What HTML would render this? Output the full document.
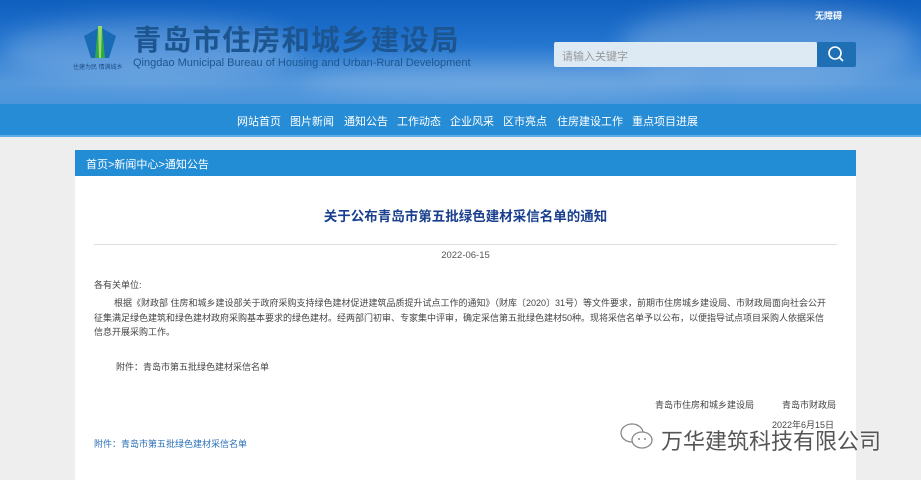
<!DOCTYPE html>
<html><head><meta charset="utf-8"><style>
*{margin:0;padding:0;box-sizing:border-box}
body{width:921px;height:480px;overflow:hidden;background:#eeeeee;font-family:"Liberation Sans","Noto Sans CJK SC",sans-serif;position:relative}
.hd{position:absolute;left:0;top:0;width:921px;height:104px;background:linear-gradient(180deg,#0f5fbf 0%,#2476d0 45%,#5598dc 80%,#4b95dc 100%)}
.cloud{position:absolute;border-radius:50%;background:rgba(255,255,255,.22);filter:blur(12px)}
.nav{position:absolute;left:0;top:104px;width:921px;height:33px;background:#268cd5;border-bottom:2px solid #5aaee8}
.nav span{position:absolute;top:9px;color:#fff;font-size:11px}
.t1{position:absolute;left:133px;top:24px;font-size:28.5px;font-weight:bold;color:#1d5590;letter-spacing:1.2px;line-height:34px}
.t2{position:absolute;left:133px;top:57px;font-size:11px;color:#1d5590;white-space:nowrap}
.panel{position:absolute;left:75px;top:150px;width:781px;height:330px;background:#fff}
.bc{height:26px;background:#228cd5;color:#fff;font-size:11px;padding:6px 0 0 11px}
p{position:absolute;font-size:9px;color:#444;line-height:14.5px}
</style></head><body>
<div class="hd">
<div class="cloud" style="left:0;top:20px;width:300px;height:60px"></div>
<div class="cloud" style="left:620px;top:5px;width:300px;height:80px"></div>
<div class="cloud" style="left:300px;top:60px;width:400px;height:40px;background:rgba(255,255,255,.15)"></div>
</div>
<svg style="position:absolute;left:83px;top:24px" width="34" height="36" viewBox="0 0 34 36"><polygon points="1,12 17,3 33,12 26,34 8,34" fill="#1a6bb5"/><polygon points="12,34 15,2 19,2 22,34" fill="#2ea84a"/><polygon points="15,2 19,2 18,34 16,34" fill="#9ad96a"/></svg>
<div style="position:absolute;left:73px;top:62px;font-size:6px;color:#1d4e88;white-space:nowrap">住建为民 情满城乡</div>
<div class="t1">青岛市住房和城乡建设局</div>
<div class="t2">Qingdao Municipal Bureau of Housing and Urban-Rural Development</div>
<div style="position:absolute;left:815px;top:9px;font-size:9px;color:#fff;font-weight:bold">无障碍</div>
<div style="position:absolute;left:554px;top:42px;width:263px;height:25px;background:#dde9f3;border-radius:2px;font-size:11px;color:#999;padding:6px 0 0 8px">请输入关键字</div>
<div style="position:absolute;left:817px;top:42px;width:39px;height:25px;background:#1e6fb4;border-radius:2px"><svg width="39" height="25"><circle cx="18" cy="11" r="6" fill="none" stroke="#fff" stroke-width="1.6"/><line x1="22.5" y1="15.5" x2="26" y2="19" stroke="#fff" stroke-width="1.8"/></svg></div>
<div class="nav">
<span style="left:237px">网站首页</span><span style="left:290px">图片新闻</span><span style="left:344px">通知公告</span><span style="left:397px">工作动态</span><span style="left:450px">企业风采</span><span style="left:503px">区市亮点</span><span style="left:557px">住房建设工作</span><span style="left:632px">重点项目进展</span>
</div>
<div class="panel">
<div class="bc">首页&gt;新闻中心&gt;通知公告</div>
<div style="position:absolute;left:0;width:781px;top:55px;text-align:center;font-size:13.5px;font-weight:bold;color:#1a3f8f">关于公布青岛市第五批绿色建材采信名单的通知</div>
<div style="position:absolute;left:19px;top:94px;width:743px;height:1px;background:#ddd"></div>
<div style="position:absolute;left:0;width:781px;top:100px;text-align:center;font-size:9.5px;color:#555">2022-06-15</div>
<p style="left:19px;top:128px">各有关单位:</p>
<p style="left:19px;top:146px;width:738px;text-indent:20px">根据《财政部 住房和城乡建设部关于政府采购支持绿色建材促进建筑品质提升试点工作的通知》（财库〔2020〕31号）等文件要求，前期市住房城乡建设局、市财政局面向社会公开征集满足绿色建筑和绿色建材政府采购基本要求的绿色建材。经两部门初审、专家集中评审，确定采信第五批绿色建材50种。现将采信名单予以公布，以便指导试点项目采购人依据采信信息开展采购工作。</p>
<p style="left:41px;top:210px">附件：青岛市第五批绿色建材采信名单</p>
<p style="left:580px;top:248px">青岛市住房和城乡建设局</p>
<p style="left:707px;top:248px">青岛市财政局</p>
<p style="left:697px;top:268px">2022年6月15日</p>
<p style="left:19px;top:287px;color:#2a6fb8">附件：青岛市第五批绿色建材采信名单</p>
</div>
<svg style="position:absolute;left:618px;top:422px" width="40" height="30" viewBox="0 0 40 30"><ellipse cx="14" cy="11" rx="11" ry="9" fill="#fff" stroke="#888" stroke-width="1.3"/><ellipse cx="24" cy="18" rx="10" ry="8" fill="#fff" stroke="#888" stroke-width="1.3"/><circle cx="21" cy="17" r="1" fill="#888"/><circle cx="27" cy="17" r="1" fill="#888"/></svg>
<div style="position:absolute;left:661px;top:424px;font-size:22px;color:#555;text-shadow:0 0 2px #fff">万华建筑科技有限公司</div>
</body></html>
